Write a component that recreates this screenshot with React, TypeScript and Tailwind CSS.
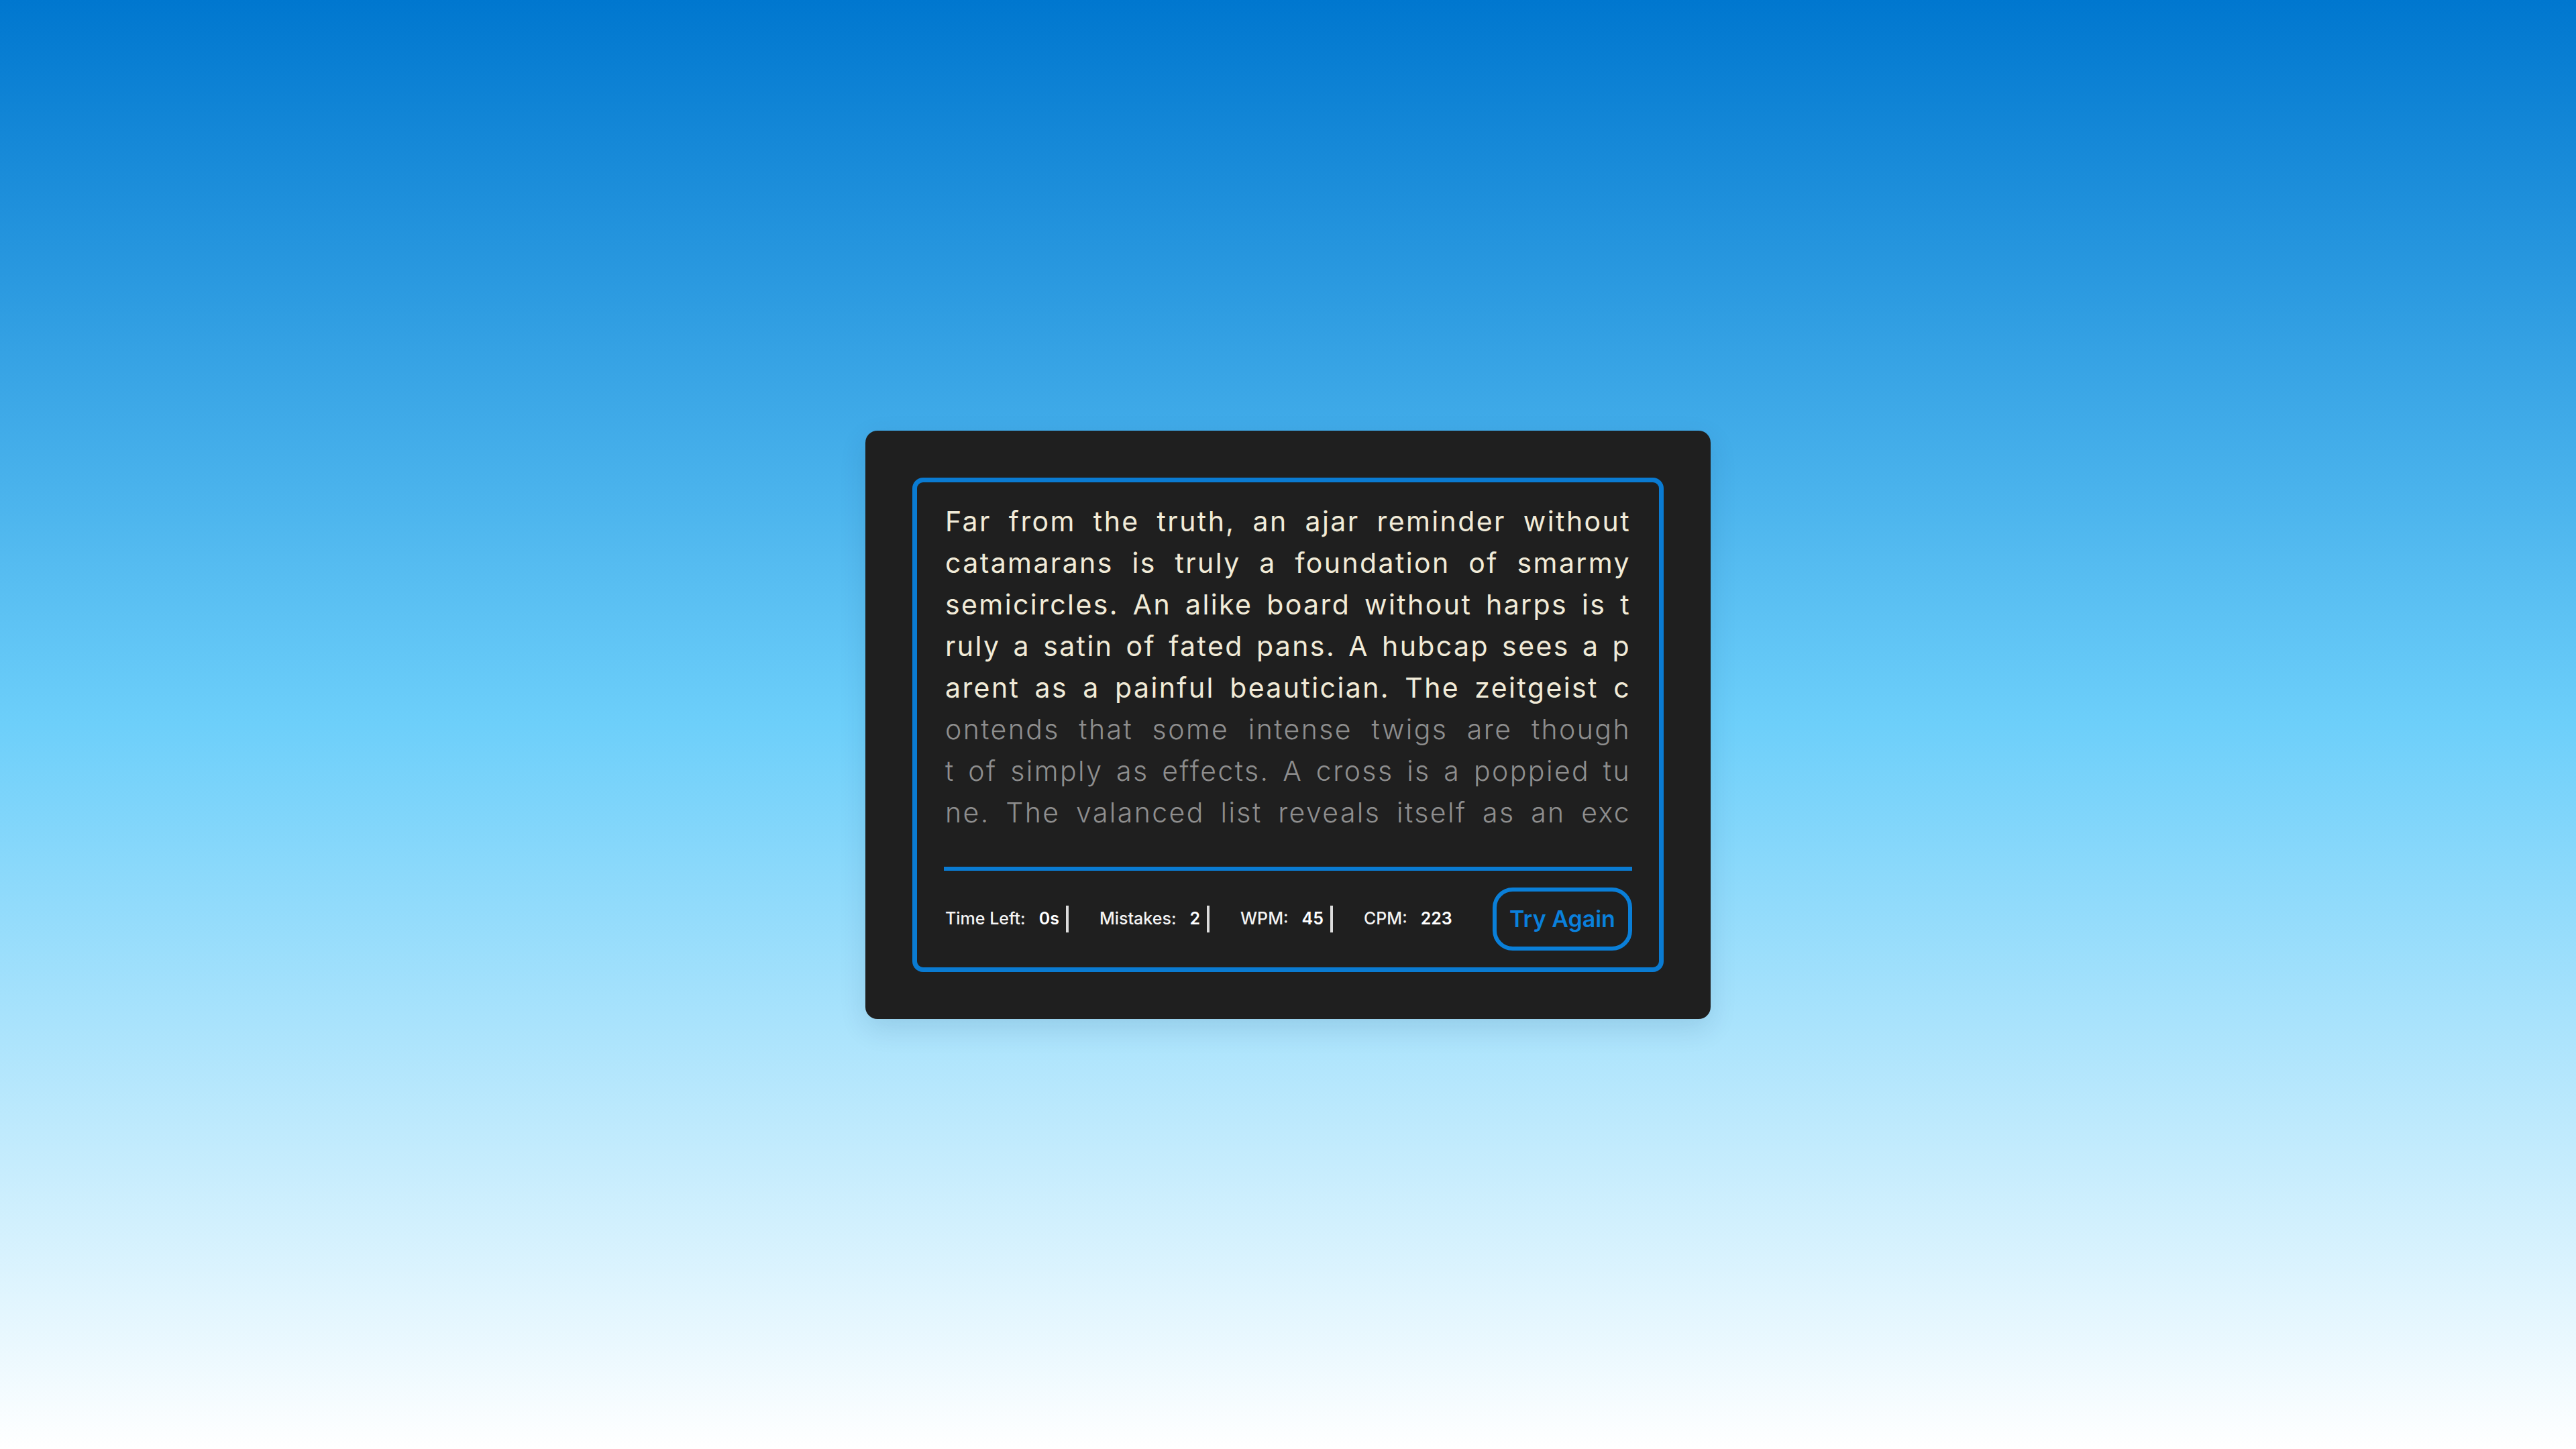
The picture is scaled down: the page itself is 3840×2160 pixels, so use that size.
import React from "react";

const typed = [
  "Far from the truth, an ajar reminder without",
  "catamarans is truly a foundation of smarmy",
  "semicircles. An alike board without harps is t",
  "ruly a satin of fated pans. A hubcap sees a p",
  "arent as a painful beautician. The zeitgeist c",
];
const untyped = [
  "ontends that some intense twigs are though",
  "t of simply as effects. A cross is a poppied tu",
  "ne. The valanced list reveals itself as an exc",
  "iting design. A prepared squirrel is a spring",
];

function Stat({ label, value, bar }: { label: string; value: string; bar: boolean }) {
  return (
    <div className="flex items-center">
      <span className="font-medium text-[#f4f4f4]">{label}</span>
      <span className="ml-[20px] font-semibold text-white">{value}</span>
      {bar && <span className="ml-[10px] mr-[46px] block h-[40px] w-[4px] bg-[#dcdcdc]" />}
    </div>
  );
}

export default function App() {
  return (
    <div
      className="flex min-h-screen w-full items-center justify-center bg-[linear-gradient(to_bottom,#0077cf_0%,#6dcffa_50%,#ffffff_100%)]"
      style={{ fontFamily: "Inter, 'Open Sans', sans-serif" }}
    >
      <div className="w-[1260px] rounded-[18px] bg-[#1f1f1f] p-[70px] shadow-[0_14px_40px_rgba(0,40,80,0.12)]">
        <div className="rounded-[16px] border-[7px] border-[#0a7bd2] px-[40px] pb-[25px] pt-[27px]">
          <div className="h-[509px] overflow-hidden px-[2px] text-[41px] leading-[62px] tracking-[2.4px]">
            {typed.map((l, i) => (
              <div key={"t" + i} className="whitespace-nowrap text-justify text-[#f1ebd8] [text-align-last:justify]">
                {l}
              </div>
            ))}
            {untyped.map((l, i) => (
              <div key={"u" + i} className="whitespace-nowrap text-justify font-light text-[#8e8e8e] [text-align-last:justify]">
                {l}
              </div>
            ))}
          </div>
          <div className="mt-[37px] h-[6px] w-full bg-[#0a7bd2]" />
          <div className="mt-[25px] flex items-center justify-between">
            <div className="flex items-center pl-[2px] text-[25px]">
              <Stat label="Time Left:" value="0s" bar />
              <Stat label="Mistakes:" value="2" bar />
              <Stat label="WPM:" value="45" bar />
              <Stat label="CPM:" value="223" bar={false} />
            </div>
            <button className="flex h-[94px] w-[208px] items-center justify-center rounded-[30px] border-[6px] border-[#0a7fd8] bg-transparent text-[34px] font-semibold text-[#0a80dc]">
              Try Again
            </button>
          </div>
        </div>
      </div>
    </div>
  );
}
